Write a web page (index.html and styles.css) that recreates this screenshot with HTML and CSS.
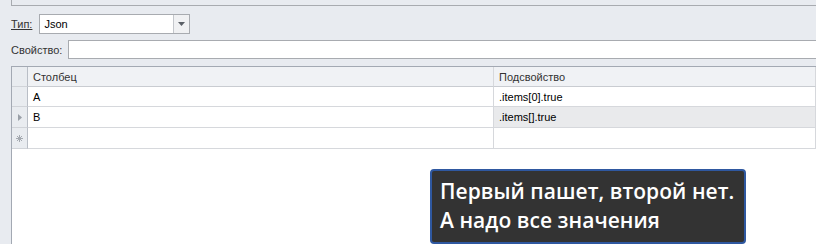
FILE: index.html
```html
<!DOCTYPE html>
<html>
<head>
  <title>Json</title>
  <link rel="stylesheet" href="styles.css">
</head>
<body>
  <div class="window">
    <div class="top-box"></div>

    <div class="field type-field">
      <label class="label underline">Тип:</label>
      <div class="combo">
        <span class="combo-text">Json</span>
        <span class="combo-btn">
          <svg width="7" height="4" viewBox="0 0 7 4"><path d="M0 0h7L3.5 4z" fill="#5a5f66"/></svg>
        </span>
      </div>
    </div>

    <div class="field prop-field">
      <label class="label">Свойство:</label>
      <div class="input"></div>
    </div>

    <div class="grid">
      <div class="cell rh head"></div>
      <div class="cell head">Столбец</div>
      <div class="cell head">Подсвойство</div>

      <div class="cell rh"></div>
      <div class="cell">A</div>
      <div class="cell">.items[0].true</div>

      <div class="cell rh">
        <svg width="4" height="7" viewBox="0 0 4 7"><path d="M0 0l4 3.5L0 7z" fill="#9aa0a8"/></svg>
      </div>
      <div class="cell">B</div>
      <div class="cell current">.items[].true</div>

      <div class="cell rh">
        <svg width="7" height="7" viewBox="0 0 7 7"><path d="M3.5 0v7M0 3.5h7M1 1l5 5M6 1L1 6" stroke="#a4a9b0" stroke-width="1"/></svg>
      </div>
      <div class="cell"></div>
      <div class="cell"></div>

      <div class="grid-empty"></div>
    </div>

    <div class="tooltip">
      Первый пашет, второй нет.<br>
      А надо все значения
    </div>
  </div>
</body>
</html>
```

FILE: styles.css
```css
body {
  margin: 0;
  padding: 0;
  background: #e8ebf0;
  font-family: 'Liberation Sans', Arial, sans-serif;
  font-size: 11px;
  color: #1e1e1e;
}
.window {
  position: relative;
  width: 816px;
  height: 244px;
  overflow: hidden;
  display: flex;
  flex-direction: column;
}
.top-box {
  height: 5px;
  margin-left: 11px;
  border-left: 1px solid #a8abb0;
  border-bottom: 1px solid #a8abb0;
}
.field {
  display: flex;
  align-items: center;
  margin-left: 11px;
}
.type-field {
  margin-top: 8px;
}
.prop-field {
  margin-top: 6px;
}
.label {
  color: #333;
  margin-right: 7px;
}
.underline {
  text-decoration: underline;
}
.combo {
  width: 149px;
  height: 18px;
  border: 1px solid #a8abb0;
  background: white;
  display: flex;
  align-items: center;
}
.combo-text {
  flex: 1;
  padding-left: 4px;
  color: #000;
}
.combo-btn {
  width: 15px;
  height: 18px;
  border-left: 1px solid #c4c7cc;
  background: #f0f1f3;
  display: flex;
  align-items: center;
  justify-content: center;
}
.input {
  flex: 1;
  height: 17px;
  margin-left: -1px;
  margin-right: -2px;
  border: 1px solid #a8abb0;
  background: white;
}
.grid {
  flex: 1;
  margin-top: 7px;
  margin-left: 11px;
  border-left: 1px solid #a3a9b3;
  border-top: 1px solid #a3a9b3;
  background: white;
  display: grid;
  grid-template-columns: 16px 466px 1fr;
  grid-template-rows: 20px 20px 21px 21px 1fr;
}
.cell {
  border-right: 1px solid #d6d8dc;
  border-bottom: 1px solid #d6d8dc;
  padding-left: 5px;
  display: flex;
  align-items: center;
  color: #000;
}
.cell.head {
  background: #f0f2f5;
  color: #333;
  border-bottom-color: #c9ccd1;
}
.cell.rh {
  padding-left: 0;
  justify-content: center;
  background: #e9ecf0;
  border-right-color: #b9bec6;
  border-bottom-color: #d0d3d8;
}
.cell.current {
  background: #e9eaec;
}
.grid-empty {
  grid-column: 1 / 4;
}
.tooltip {
  position: absolute;
  left: 430px;
  top: 169px;
  width: 298px;
  height: 62px;
  padding: 6px 6px 3px 8px;
  background: #333333;
  border: 2px solid #2f58a0;
  border-radius: 4px;
  color: white;
  font-family: 'Open Sans', sans-serif;
  font-weight: 600;
  font-size: 21px;
  line-height: 29px;
  letter-spacing: 0.05px;
  white-space: nowrap;
}
```
